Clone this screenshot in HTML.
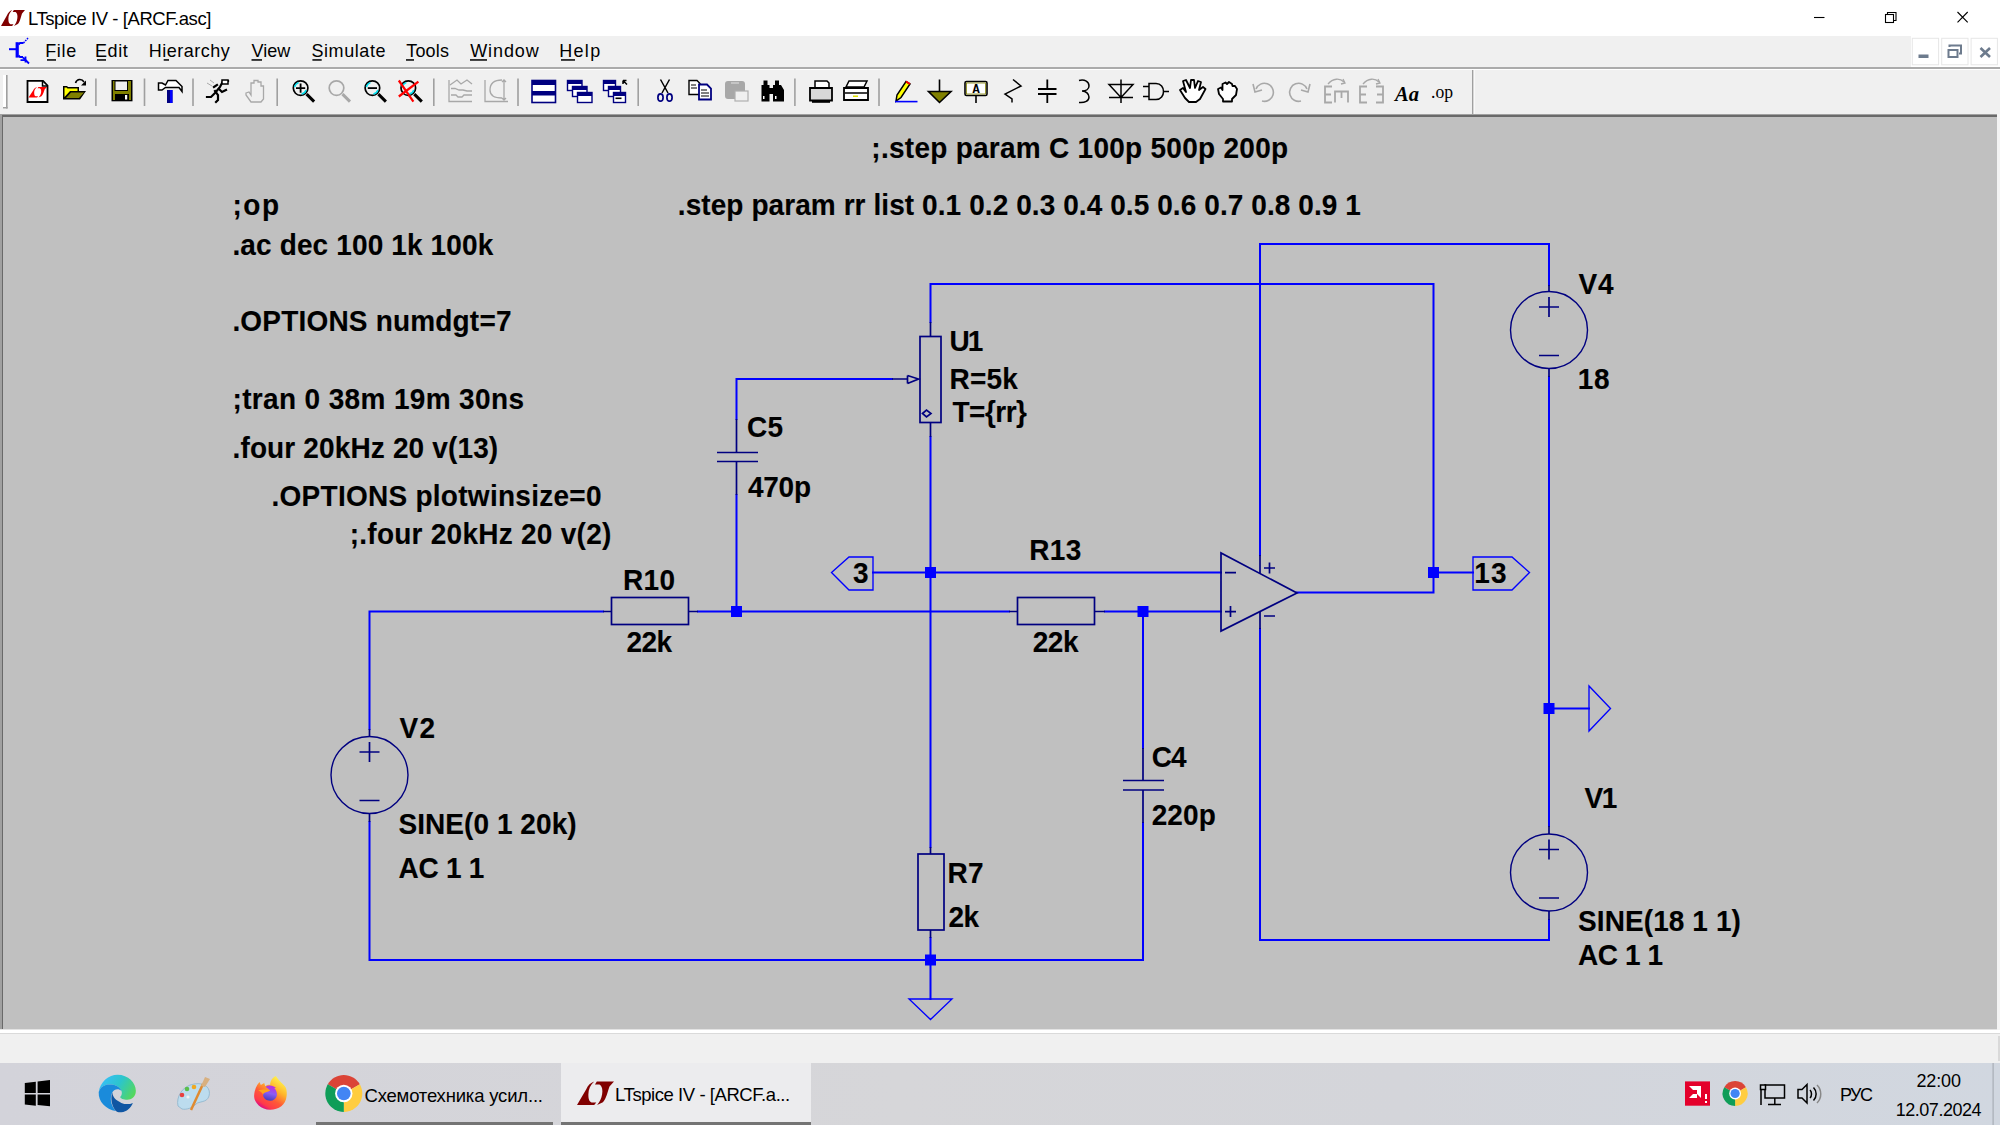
<!DOCTYPE html>
<html><head><meta charset="utf-8">
<style>
*{margin:0;padding:0;box-sizing:border-box}
html,body{width:2000px;height:1125px;overflow:hidden;background:#f0f0f0;font-family:"Liberation Sans",sans-serif}
.abs{position:absolute}
#title{left:0;top:0;width:2000px;height:36px;background:#fff}
#menu{left:0;top:36px;width:2000px;height:31px;background:#f0f0f0}
#menuline{left:0;top:67px;width:2000px;height:2px;background:#ababab}
#menuline2{left:0;top:69px;width:2000px;height:1px;background:#fff}
#tool{left:0;top:70px;width:2000px;height:44px;background:#f0f0f0}
#canvasframe{left:0;top:114px;width:2000px;height:916px;background:#a0a0a0}
#canvas{left:3px;top:117px;width:1994px;height:912px;background:#c0c0c0}
#status{left:0;top:1029px;width:2000px;height:34px;background:#f0f0f0}
#taskbar{left:0;top:1063px;width:2000px;height:62px;background:linear-gradient(90deg,#d3d3da 0%,#d6d6d9 45%,#d4d5da 70%,#d1d7e0 100%)}
.mi{position:absolute;top:40px;font-size:18px;color:#000;white-space:nowrap}
.sep{position:absolute;top:78px;width:2px;height:28px;background:#a0a0a0}
</style></head><body>
<div class="abs" id="title"></div>
<div class="abs" id="menu"></div>
<div class="abs" style="left:1911px;top:36px;width:89px;height:31px;background:#fff"></div>
<div class="abs" id="menuline"></div>
<div class="abs" id="menuline2"></div>
<div class="abs" id="tool"></div>
<div class="abs" id="canvasframe"></div>
<div class="abs" style="left:2px;top:115px;width:1995px;height:2px;background:#696969"></div>
<div class="abs" style="left:2px;top:115px;width:1px;height:914px;background:#696969"></div>
<div class="abs" id="canvas"></div>
<div class="abs" id="status"></div>
<div class="abs" style="left:0;top:1029px;width:2000px;height:1px;background:#e3e3e3"></div>
<div class="abs" style="left:0;top:1030px;width:2000px;height:3px;background:#fff"></div>
<div class="abs" style="left:0;top:1033px;width:2000px;height:1px;background:#dadada"></div>
<div class="abs" style="left:1997px;top:114px;width:3px;height:916px;background:#f4f4f4"></div>
<div class="abs" id="taskbar"></div>
<svg class="abs" style="left:0;top:0" width="2000" height="1125" viewBox="0 0 2000 1125"><g fill="none" stroke="#0000FF" stroke-width="2" stroke-linecap="square" stroke-linejoin="miter"><path d="M1549,285 V244 H1260"/><path d="M930.5,322 V284 H1433.5 V592.5 H1297"/><path d="M1433.5,572.5 H1473"/><path d="M1260,555 V244"/><path d="M1260,629 V940 H1549 V920"/><path d="M1549,377 V826"/><path d="M1549,708.5 H1589"/><path d="M930.5,437 V847"/><path d="M873,572.5 H1221"/><path d="M369.5,729 V611.5 H603"/><path d="M698,611.5 H1009"/><path d="M1105,611.5 H1221"/><path d="M736.5,419 V379 H892"/><path d="M736.5,495 V611.5"/><path d="M1143,611.5 V748"/><path d="M1143,823 V960"/><path d="M369.5,822 V960 H1143"/><path d="M930.5,938 V999"/></g><g fill="#0000FF"><rect x="925.0" y="567.0" width="11" height="11"/><rect x="731.0" y="606.0" width="11" height="11"/><rect x="1137.5" y="606.0" width="11" height="11"/><rect x="1428.0" y="567.0" width="11" height="11"/><rect x="925.0" y="954.5" width="11" height="11"/><rect x="1543.5" y="703.0" width="11" height="11"/></g><g fill="none" stroke="#0000FF" stroke-width="1.35"><path d="M909,999 H952 L930.5,1019.5 Z"/><path d="M1589,686 V731 L1610.5,708.5 Z"/><path d="M873,557 V590 H849 L831.5,572.5 L849,557 Z"/><path d="M1473,557 V590 H1512 L1529.5,572.5 L1512,557 Z"/></g><g fill="none" stroke="#000080" stroke-width="1.7"><rect x="611.5" y="597.5" width="77" height="27"/><path d="M603,611.5 H611.5 M688.5,611.5 H698"/><rect x="1017.5" y="597.5" width="77" height="27"/><path d="M1009,611.5 H1017.5 M1094.5,611.5 H1105"/><rect x="918" y="854" width="26" height="76"/><path d="M930.5,847 V854 M930.5,930 V938"/><rect x="920" y="336.5" width="21" height="86"/><path d="M930.5,322 V336.5 M930.5,422.5 V437"/><path d="M892,379 H907 M907.5,375.5 V383.5 M907.5,375.5 L918.5,379 L907.5,383.5"/><path d="M922.5,413.5 L926.5,410 L931,413.5 L926.5,417 Z"/><path d="M736.5,419 V452.5 M717,452.5 H758 M717,461.5 H758 M736.5,461.5 V495"/><path d="M1143,748 V780.5 M1123,780.5 H1164 M1123,790 H1164 M1143,790 V823"/><path d="M1221,553 V631 L1297,593 Z"/><path d="M1260,555 V573 M1260,611 V629"/><path d="M1225,572.7 H1236 M1225,611.6 H1236 M1230.5,606 V617 M1264,568 H1275 M1269.5,562.5 V573.5 M1264,616 H1275"/><circle cx="369.5" cy="775" r="38.5" stroke-width="1.4"/><path d="M369.5,729 V736.5 M369.5,813.5 V822 M359.5,752 H379.5 M369.5,742 V762 M359.5,800.5 H379.5"/><circle cx="1549" cy="330" r="38.5" stroke-width="1.4"/><path d="M1549,285 V291.5 M1549,368.5 V377 M1539,307 H1559 M1549,297 V317 M1539,355.5 H1559"/><circle cx="1549" cy="872.5" r="38.5" stroke-width="1.4"/><path d="M1549,826 V834.0 M1549,911.0 V920 M1539,849.5 H1559 M1549,839.5 V859.5 M1539,898.0 H1559"/></g><g font-family="Liberation Sans" font-weight="bold" font-size="28" fill="#000" stroke="#000" stroke-width="0.12"><text transform="translate(871.3,157.90) scale(1,1.05)" x="0" y="0" textLength="416.8" lengthAdjust="spacing">;.step param C 100p 500p 200p</text><text transform="translate(677.8,214.80) scale(1,1.05)" x="0" y="0" textLength="683.1" lengthAdjust="spacing">.step param rr list 0.1 0.2 0.3 0.4 0.5 0.6 0.7 0.8 0.9 1</text><text transform="translate(232.6,215.00) scale(1,1.05)" x="0" y="0" textLength="46.4" lengthAdjust="spacing">;op</text><text transform="translate(232.4,254.70) scale(1,1.05)" x="0" y="0" textLength="260.9" lengthAdjust="spacing">.ac dec 100 1k 100k</text><text transform="translate(232.4,331.20) scale(1,1.05)" x="0" y="0" textLength="279.1" lengthAdjust="spacing">.OPTIONS numdgt=7</text><text transform="translate(232.5,409.10) scale(1,1.05)" x="0" y="0" textLength="291.5" lengthAdjust="spacing">;tran 0 38m 19m 30ns</text><text transform="translate(232.5,458.10) scale(1,1.05)" x="0" y="0" textLength="265.7" lengthAdjust="spacing">.four 20kHz 20 v(13)</text><text transform="translate(271.5,506.40) scale(1,1.05)" x="0" y="0" textLength="330.0" lengthAdjust="spacing">.OPTIONS plotwinsize=0</text><text transform="translate(349.7,543.50) scale(1,1.05)" x="0" y="0" textLength="261.6" lengthAdjust="spacing">;.four 20kHz 20 v(2)</text><text transform="translate(949.5,351.40) scale(1,1.05)" x="0" y="0" textLength="33.9" lengthAdjust="spacing">U1</text><text transform="translate(949.5,388.70) scale(1,1.05)" x="0" y="0" textLength="68.3" lengthAdjust="spacing">R=5k</text><text transform="translate(952.4,421.60) scale(1,1.05)" x="0" y="0" textLength="74.6" lengthAdjust="spacing">T={rr}</text><text transform="translate(747.0,436.70) scale(1,1.05)" x="0" y="0" textLength="36.1" lengthAdjust="spacing">C5</text><text transform="translate(748.0,496.60) scale(1,1.05)" x="0" y="0" textLength="63.0" lengthAdjust="spacing">470p</text><text transform="translate(623.0,590.30) scale(1,1.05)" x="0" y="0" textLength="52.1" lengthAdjust="spacing">R10</text><text transform="translate(626.5,651.55) scale(1,1.05)" x="0" y="0" textLength="45.7" lengthAdjust="spacing">22k</text><text transform="translate(1029.2,559.55) scale(1,1.05)" x="0" y="0" textLength="52.1" lengthAdjust="spacing">R13</text><text transform="translate(1032.8,651.55) scale(1,1.05)" x="0" y="0" textLength="45.7" lengthAdjust="spacing">22k</text><text transform="translate(853.0,583.20) scale(1,1.05)" x="0" y="0">3</text><text transform="translate(1474.3,583.00) scale(1,1.05)" x="0" y="0" textLength="32.2" lengthAdjust="spacing">13</text><text transform="translate(1578.5,293.70) scale(1,1.05)" x="0" y="0" textLength="35.0" lengthAdjust="spacing">V4</text><text transform="translate(1577.8,388.90) scale(1,1.05)" x="0" y="0" textLength="31.9" lengthAdjust="spacing">18</text><text transform="translate(399.4,737.50) scale(1,1.05)" x="0" y="0" textLength="35.6" lengthAdjust="spacing">V2</text><text transform="translate(398.5,834.20) scale(1,1.05)" x="0" y="0" textLength="178.1" lengthAdjust="spacing">SINE(0 1 20k)</text><text transform="translate(398.5,878.20) scale(1,1.05)" x="0" y="0" textLength="85.9" lengthAdjust="spacing">AC 1 1</text><text transform="translate(1151.7,766.80) scale(1,1.05)" x="0" y="0" textLength="34.9" lengthAdjust="spacing">C4</text><text transform="translate(1151.7,824.80) scale(1,1.05)" x="0" y="0" textLength="64.1" lengthAdjust="spacing">220p</text><text transform="translate(947.6,882.70) scale(1,1.05)" x="0" y="0" textLength="36.0" lengthAdjust="spacing">R7</text><text transform="translate(948.6,927.20) scale(1,1.05)" x="0" y="0" textLength="30.5" lengthAdjust="spacing">2k</text><text transform="translate(1584.5,808.30) scale(1,1.05)" x="0" y="0" textLength="32.8" lengthAdjust="spacing">V1</text><text transform="translate(1578.0,930.80) scale(1,1.05)" x="0" y="0" textLength="162.9" lengthAdjust="spacing">SINE(18 1 1)</text><text transform="translate(1578.0,965.30) scale(1,1.05)" x="0" y="0" textLength="85.2" lengthAdjust="spacing">AC 1 1</text></g><rect x="561" y="1063" width="250" height="62" fill="#ececee"/><g transform="translate(1,10) scale(0.01714,0.01882) translate(-170,-150)" fill="#800000"><path d="M820,150 C690,200 580,280 520,430 L170,1000 H820 L900,905 H720 C640,880 600,800 600,620 C600,420 680,280 820,150 Z"/><path d="M850,255 L920,150 H1570 L1400,330 C1330,500 1280,780 1150,900 L930,1000 L1000,905 C1080,800 1130,650 1130,500 C1130,380 1090,290 1020,258 Z"/></g><g font-family="Liberation Sans" fill="#000"><text transform="translate(28.0,24.90) scale(1,1.04)" x="0" y="0" font-size="18.5" textLength="183.4" lengthAdjust="spacing">LTspice IV - [ARCF.asc]</text><text transform="translate(45.2,57.10) scale(1,1.04)" x="0" y="0" font-size="18" textLength="31.0" lengthAdjust="spacing">File</text><text transform="translate(95.0,57.10) scale(1,1.04)" x="0" y="0" font-size="18" textLength="32.7" lengthAdjust="spacing">Edit</text><text transform="translate(148.7,57.10) scale(1,1.04)" x="0" y="0" font-size="18" textLength="81.0" lengthAdjust="spacing">Hierarchy</text><text transform="translate(251.5,57.10) scale(1,1.04)" x="0" y="0" font-size="18" textLength="38.7" lengthAdjust="spacing">View</text><text transform="translate(311.4,57.10) scale(1,1.04)" x="0" y="0" font-size="18" textLength="74.1" lengthAdjust="spacing">Simulate</text><text transform="translate(406.2,57.10) scale(1,1.04)" x="0" y="0" font-size="18" textLength="42.8" lengthAdjust="spacing">Tools</text><text transform="translate(470.2,57.10) scale(1,1.04)" x="0" y="0" font-size="18" textLength="68.6" lengthAdjust="spacing">Window</text><text transform="translate(559.2,57.10) scale(1,1.04)" x="0" y="0" font-size="18" textLength="41.0" lengthAdjust="spacing">Help</text><text transform="translate(364.5,1101.50) scale(1,1.04)" x="0" y="0" font-size="18.5" textLength="178.5" lengthAdjust="spacing">Схемотехника усил...</text><text transform="translate(615.1,1101.40) scale(1,1.04)" x="0" y="0" font-size="18.5" textLength="175.1" lengthAdjust="spacing">LTspice IV - [ARCF.a...</text><text transform="translate(1840.0,1101.30) scale(1,1.04)" x="0" y="0" font-size="18" textLength="33.1" lengthAdjust="spacing">РУС</text><text transform="translate(1916.5,1086.90) scale(1,1.04)" x="0" y="0" font-size="18" textLength="44.5" lengthAdjust="spacing">22:00</text><text transform="translate(1895.8,1115.70) scale(1,1.04)" x="0" y="0" font-size="18" textLength="85.7" lengthAdjust="spacing">12.07.2024</text></g><g fill="#000"><rect x="47" y="59.2" width="9" height="1.5"/><rect x="97" y="59.2" width="9" height="1.5"/><rect x="163.7" y="59.2" width="5.300000000000011" height="1.5"/><rect x="251.5" y="59.2" width="10.5" height="1.5"/><rect x="312.4" y="59.2" width="9.300000000000011" height="1.5"/><rect x="406" y="59.2" width="8" height="1.5"/><rect x="470" y="59.2" width="17" height="1.5"/><rect x="561" y="59.2" width="14" height="1.5"/></g><g fill="none" stroke="#000" stroke-width="1.1"><path d="M1814,17.5 H1824.5"/><path d="M1887.5,14.5 V12.5 H1896 V20.5 H1894"/><rect x="1885.5" y="14.5" width="8" height="8"/><path d="M1957.5,12 L1967.7,22.3 M1967.7,12 L1957.5,22.3"/></g><g fill="#fff" stroke="#e6e6e6" stroke-width="1"><rect x="1912.3" y="38.3" width="26.3" height="26.5"/><rect x="1941.7" y="38.3" width="26.3" height="26.5"/><rect x="1971.1" y="38.3" width="26.3" height="26.5"/></g><g fill="#6d7b8d"><rect x="1918.5" y="54.5" width="10" height="3.5"/></g><g fill="none" stroke="#6d7b8d" stroke-width="2"><path d="M1949.5,47 V45.5 H1961 V53.5 H1959"/><rect x="1948.5" y="50" width="9" height="7"/><path d="M1980.5,48 L1990,57 M1990,48 L1980.5,57" stroke-width="2.6"/></g><g fill="#0000ff" stroke="#0000ff" fill-opacity="1"><rect x="15.6" y="42.2" width="3.2" height="15.4" stroke="none"/><path d="M9,49.2 H16" stroke-width="2" fill="none"/><path d="M18.5,44.5 L20,43 H23.5" stroke-width="1.8" fill="none"/><path d="M23.5,43 L28,38" stroke-width="1.5" fill="none" stroke-dasharray="1.6,1"/><path d="M18.5,55.5 L20,57 H23" stroke-width="1.8" fill="none"/><path d="M23,57.5 L27,61.5 L29,63.5" stroke-width="1.8" fill="none"/><path d="M20.5,60.2 H25.5 M25.5,56.5 V62.5" stroke-width="1.8" fill="none"/></g><g fill="#a0a0a0"><rect x="95.1" y="78.5" width="1.6" height="27.5"/><rect x="143.7" y="78.5" width="1.6" height="27.5"/><rect x="192.2" y="78.5" width="1.6" height="27.5"/><rect x="276.4" y="78.5" width="1.6" height="27.5"/><rect x="433.0" y="78.5" width="1.6" height="27.5"/><rect x="517.2" y="78.5" width="1.6" height="27.5"/><rect x="637.4" y="78.5" width="1.6" height="27.5"/><rect x="794.1" y="78.5" width="1.6" height="27.5"/><rect x="878.2" y="78.5" width="1.6" height="27.5"/></g><rect x="3" y="75" width="3" height="33.5" fill="#fff"/><rect x="6" y="75" width="1.6" height="33.5" fill="#a0a0a0"/><rect x="3" y="107" width="4.6" height="1.5" fill="#a0a0a0"/><rect x="1472" y="70" width="1.6" height="44" fill="#a0a0a0"/><rect x="1473.6" y="70" width="1" height="44" fill="#fff"/><path d="M27.5,80.8 H43 L47.5,85.5 V102 H27.5 Z" fill="#fff" stroke="#000" stroke-width="1.8"/><path d="M42.5,81 V86 H47.5" fill="none" stroke="#000" stroke-width="1.5"/><g transform="translate(28.5,87) scale(0.01321,0.01235) translate(-170,-150)" fill="#ff0000"><path d="M820,150 C690,200 580,280 520,430 L170,1000 H820 L900,905 H720 C640,880 600,800 600,620 C600,420 680,280 820,150 Z"/><path d="M850,255 L920,150 H1570 L1400,330 C1330,500 1280,780 1150,900 L930,1000 L1000,905 C1080,800 1130,650 1130,500 C1130,380 1090,290 1020,258 Z"/></g><path d="M63,86 H67 L68,87 H79 V91 H86 L80,99.5 H63 Z" fill="#000"/><path d="M64.5,87.5 H66.5 L67.5,88.5 H77.5 V91 H70 L64.5,97 Z" fill="#ffff00"/><path d="M66,98 L71,92.5 H84 L79,98 Z" fill="#808000"/><path d="M75.5,83 C77,78.5 82,78.5 84,82" fill="none" stroke="#000" stroke-width="1.6"/><path d="M86,80.5 V85.5 H81 Z" fill="#000"/><rect x="111.5" y="80" width="21" height="21.3" fill="#000"/><rect x="113" y="81" width="18" height="19" fill="#808000"/><rect x="115" y="81" width="12.5" height="9.5" fill="#f0f0f0" stroke="#000" stroke-width="1"/><rect x="115" y="94" width="14" height="6.5" fill="#000"/><rect x="125" y="95" width="2.2" height="4.5" fill="#fff"/><path d="M158.5,83 H162 L165.5,85 L168,80.5 H176 L182,86.5 V91.5 L179,87.5 H165.5 L162,90 H158.5 Z" fill="#fff" stroke="#000" stroke-width="1.5"/><rect x="167" y="90" width="5.5" height="13" fill="#000080"/><rect x="170" y="90" width="2.5" height="13" fill="#0000ff"/><g fill="none" stroke="#000" stroke-width="2.2" stroke-linecap="square"><path d="M207,97 H211 L215,93 L220,87 L223,81 H228"/><path d="M215,91 L218,95 L218,100 L216,102"/><path d="M219,89 L222,92 L226,90"/><path d="M214,87 L217,85"/></g><rect x="222" y="80" width="6" height="4" fill="#fff" stroke="#000" stroke-width="1.5"/><path d="M207,83 L212,86 M210,80 L214,83" stroke="#aaa" stroke-width="1" fill="none"/><path d="M246,93 L249,92 L251,95 V83 H254 V80.5 H258 V82 H261 V86 H263.5 V99 L261,102 H251 L246,95 Z" fill="none" stroke="#a8a8a8" stroke-width="1.3"/><g fill="none" stroke="#000"><circle cx="300.6" cy="88.1" r="7.3" stroke-width="1.7"/><path d="M306.6,94.1 L314.1,101.6" stroke-width="3"/></g><path d="M294.6,87.1 A6,6 0 0 1 298.6,82.6 M306.1,90.1 A6,6 0 0 1 301.6,94.1" stroke="#00e0f0" stroke-width="1.5" fill="none"/><path d="M296,88.1 H305.2 M300.6,83.5 V92.7" stroke="#000" stroke-width="1.8"/><g fill="none" stroke="#a8a8a8"><circle cx="336.5" cy="88.1" r="7.3" stroke-width="1.7"/><path d="M342.5,94.1 L350.0,101.6" stroke-width="3"/></g><g fill="none" stroke="#000"><circle cx="372.4" cy="88.1" r="7.3" stroke-width="1.7"/><path d="M378.4,94.1 L385.9,101.6" stroke-width="3"/></g><path d="M366.4,87.1 A6,6 0 0 1 370.4,82.6 M377.9,90.1 A6,6 0 0 1 373.4,94.1" stroke="#00e0f0" stroke-width="1.5" fill="none"/><path d="M367.8,88.1 H377" stroke="#000" stroke-width="1.8"/><g fill="none" stroke="#000"><circle cx="408.3" cy="88.1" r="7.3" stroke-width="1.7"/><path d="M414.3,94.1 L421.8,101.6" stroke-width="3"/></g><path d="M402.3,87.1 A6,6 0 0 1 406.3,82.6 M413.8,90.1 A6,6 0 0 1 409.3,94.1" stroke="#00e0f0" stroke-width="1.5" fill="none"/><path d="M398.8,80.5 L413.4,101.6 M418.4,81.6 L398.8,96.5" stroke="#ff0000" stroke-width="2.2"/><g fill="none" stroke="#a8a8a8" stroke-width="1.3"><path d="M449,80 V101.5 H472"/><path d="M450,85 L457,80 L461,84 L467,80 L472,84"/><path d="M451,88.5 H455 L459,90 H463 L467,91 H472"/><path d="M451,95 H456 L458,97 H462 L464,95 H472"/><path d="M485,80 V101.5 H508"/><path d="M502,80 C494,80 490,84 490,90 C490,96 495,98 502,98"/><path d="M504,80 V100 M502,82 L504,80 L506,82 M502,98 L504,100 L506,98"/></g><rect x="532" y="80.5" width="23.5" height="22" fill="#fff" stroke="#000080" stroke-width="1.6"/><rect x="532" y="80.5" width="23.5" height="4.5" fill="#000080"/><rect x="532" y="91" width="23.5" height="4.5" fill="#000080"/><rect x="567.5" y="80.5" width="14.5" height="10" fill="#fff" stroke="#000080" stroke-width="1.4"/><rect x="567.5" y="80.5" width="14.5" height="3.5" fill="#000080"/><rect x="572.5" y="86.5" width="14.5" height="10" fill="#fff" stroke="#000080" stroke-width="1.4"/><rect x="572.5" y="86.5" width="14.5" height="3.5" fill="#000080"/><rect x="577.5" y="92.5" width="14.5" height="10" fill="#fff" stroke="#000080" stroke-width="1.4"/><rect x="577.5" y="92.5" width="14.5" height="3.5" fill="#000080"/><rect x="603.5" y="80.5" width="12" height="10" fill="#fff" stroke="#000080" stroke-width="1.4"/><rect x="603.5" y="80.5" width="12" height="3.5" fill="#000080"/><rect x="608.5" y="86.5" width="12" height="10" fill="#fff" stroke="#000080" stroke-width="1.4"/><rect x="608.5" y="86.5" width="12" height="3.5" fill="#000080"/><rect x="613.5" y="92.5" width="12" height="10" fill="#fff" stroke="#000080" stroke-width="1.4"/><rect x="613.5" y="92.5" width="12" height="3.5" fill="#000080"/><rect x="615.5" y="97.5" width="6" height="1.6" fill="#000"/><path d="M623,80.5 L627,84.5 M623,80.5 V84 M623,80.5 H626.5" stroke="#000" stroke-width="1.5" fill="none"/><g fill="none" stroke-width="1.5"><path d="M660.5,79.5 L668,93 M669.5,79.5 L662,93" stroke="#000"/><ellipse cx="660.5" cy="97.5" rx="2.6" ry="3.6" stroke="#000080" stroke-width="1.7"/><ellipse cx="669.5" cy="97.5" rx="2.6" ry="3.6" stroke="#000080" stroke-width="1.7"/></g><path d="M689,80.5 H697 L700,83.5 V94.5 H689 Z" fill="#fff" stroke="#000" stroke-width="1.4"/><path d="M699,84.5 H707 L711,88.5 V99.5 H699 Z" fill="#fff" stroke="#000080" stroke-width="1.8"/><path d="M691,85 H696 M691,88 H697 M701,90 H707 M701,93 H709 M701,96 H709" stroke="#000" stroke-width="1"/><rect x="725" y="81" width="20" height="18" rx="3" fill="#a8a8a8"/><rect x="735" y="91" width="13" height="10" fill="#f0f0f0" stroke="#b0b0b0" stroke-width="1.2"/><path d="M731,83 H739" stroke="#d8d8d8" stroke-width="1.2"/><g fill="#000"><rect x="763.5" y="80.5" width="4" height="5"/><rect x="775" y="80.5" width="4" height="5"/><path d="M761.5,85 H769.5 V101.5 H761.5 Z"/><path d="M773,85 H781 L784,90 V101.5 H773 Z"/><rect x="769" y="88" width="4" height="6"/></g><rect x="763" y="96" width="1.5" height="3" fill="#fff"/><rect x="775" y="96" width="1.5" height="3" fill="#fff"/><path d="M815,81 H827 L829,83 V88 H815 Z" fill="#fff" stroke="#000" stroke-width="1.5"/><path d="M810,88 H832 V100.5 H810 Z" fill="#d8d8d8" stroke="#000" stroke-width="1.8"/><rect x="812" y="101" width="18" height="1.8" fill="#000"/><path d="M849,81 H867 L864,87 H846 Z" fill="#fff" stroke="#000" stroke-width="1.5"/><path d="M844,88 H868 V100 H844 Z" fill="#fff" stroke="#000" stroke-width="1.8"/><path d="M845,93 H867" stroke="#000" stroke-width="1.5"/><rect x="853" y="95.5" width="5" height="1.5" fill="#e0e000"/><path d="M896,101 L897,95 L906,81.5 L910,84 L901,97.5 Z" fill="#ffff00" stroke="#000" stroke-width="1.5"/><path d="M906,81.5 L910,84" stroke="#ff0000" stroke-width="2"/><rect x="895" y="100.8" width="22.5" height="1.6" fill="#0000ff"/><path d="M939.5,79.5 V91.5" stroke="#000" stroke-width="1.6"/><path d="M928.5,91.5 H951 L939.5,102.5 Z" fill="#808000" stroke="#000" stroke-width="1.6"/><path d="M932.5,93.5 H947 L939.5,100 Z" fill="#c0c0a0" opacity="0"/><rect x="965" y="81.5" width="22" height="14" rx="1.5" fill="#fff" stroke="#000" stroke-width="1.6"/><rect x="966.5" y="83" width="19" height="11" fill="none" stroke="#808000" stroke-width="0.8"/><text x="976" y="93" font-family="Liberation Mono" font-weight="bold" font-size="12" text-anchor="middle">A</text><path d="M976,96 V103" stroke="#000" stroke-width="1.6"/><path d="M1013,79.5 L1021,86 L1005,94 L1012,99 V102.5" fill="none" stroke="#000" stroke-width="1.5"/><path d="M1047.3,79.5 V89 M1038,89 H1056.5 M1038,94 H1056.5 M1047.3,94 V103" fill="none" stroke="#000" stroke-width="1.8"/><path d="M1079,80.5 C1085,79 1089,82 1089,86 C1089,89 1086,91 1082,91 C1086,91 1089,94 1089,97 C1089,101 1085,103 1079,102.5" fill="none" stroke="#000" stroke-width="1.5"/><path d="M1121,79.5 V103 M1109,84.5 H1133 L1121,97.5 Z M1109,97.5 H1133" fill="none" stroke="#000" stroke-width="1.5"/><path d="M1149,83.5 H1156 C1166,83.5 1166,99.5 1156,99.5 H1149 Z M1143,86.5 H1149 M1143,96.5 H1149 M1163,91.5 H1169" fill="none" stroke="#000" stroke-width="1.5"/><path d="M1180,90 L1183,88 L1186,92 L1183,81 L1186,80 L1190,88 L1191,80 L1194,80 L1195,88 L1198,81 L1201,82 L1199,90 L1203,87 L1205.5,89 L1200,99 L1196,102 H1189 L1185,98 Z" fill="#fff" stroke="#000" stroke-width="1.8" stroke-linejoin="round"/><path d="M1218,89 L1221,87.5 L1222.5,90 V84 L1225.5,82.5 L1227,84 L1229,82 L1232,84 L1232.5,86 L1235,86 L1237,89 L1236,95 L1232,99 V101.5 H1223 V99 L1219,94 Z" fill="#fff" stroke="#000" stroke-width="1.8" stroke-linejoin="round"/><g fill="none" stroke="#a8a8a8" stroke-width="1.6"><path d="M1256,89 A9,9 0 1 1 1262,101"/><path d="M1253,84 L1255,92 L1262,90"/><path d="M1307,89 A9,9 0 1 0 1301,101"/><path d="M1310,84 L1308,92 L1301,90"/></g><g fill="none" stroke="#a8a8a8" stroke-width="1.8"><path d="M1332,86.5 H1325 V102.5 H1332 M1325,94.5 H1331"/><path d="M1335,102.5 V91.5 H1348 V102.5 M1341.5,91.5 V98"/><path d="M1328,84 C1333,78 1340,78 1344,82" stroke-width="1.3"/><path d="M1343,79 L1345,83 L1341,84" stroke-width="1.3"/><path d="M1367,86.5 H1360 V102.5 H1367 M1360,94.5 H1366"/><path d="M1376,86.5 H1383 V102.5 H1376 M1383,94.5 H1377"/><path d="M1363,84 C1368,78 1375,78 1379,82" stroke-width="1.3"/><path d="M1378,79 L1380,83 L1376,84" stroke-width="1.3"/></g><text x="1395" y="101" font-family="Liberation Serif" font-style="italic" font-weight="bold" font-size="21" fill="#000" textLength="24" lengthAdjust="spacingAndGlyphs">Aa</text><text x="1431" y="98" font-family="Liberation Serif" font-size="19" fill="#000" textLength="22" lengthAdjust="spacingAndGlyphs">.op</text><rect x="316" y="1122" width="237" height="3" fill="#747474"/><rect x="561" y="1122" width="250" height="3" fill="#747474"/><rect x="1998" y="1036" width="2" height="25" fill="#d9d9d9"/><rect x="1992.5" y="1063" width="1.2" height="62" fill="#a9aeb6"/><g fill="#000"><path d="M24.8,1083 L35.8,1081.8 V1093 H24.8 Z"/><path d="M37.6,1081.5 L50,1080 V1093 H37.6 Z"/><path d="M24.8,1094.6 H35.8 V1105.7 L24.8,1104.5 Z"/><path d="M37.6,1094.6 H50 V1106.3 L37.6,1105 Z"/></g><defs><linearGradient id="edg1" x1="0" y1="0" x2="1" y2="1"><stop offset="0" stop-color="#35c1f1"/><stop offset="0.6" stop-color="#2db67a"/><stop offset="1" stop-color="#6de27a"/></linearGradient><linearGradient id="edg2" x1="0" y1="0" x2="0" y2="1"><stop offset="0" stop-color="#1a8ee0"/><stop offset="1" stop-color="#0b57a8"/></linearGradient><radialGradient id="ffx" cx="0.5" cy="0.4" r="0.6"><stop offset="0" stop-color="#ffcf3a"/><stop offset="0.5" stop-color="#ff7a1a"/><stop offset="1" stop-color="#e8245a"/></radialGradient><radialGradient id="ffp" cx="0.5" cy="0.5" r="0.5"><stop offset="0" stop-color="#6b3ed6"/><stop offset="1" stop-color="#a32fb4"/></radialGradient></defs><g transform="translate(94,1072) scale(0.039108)"><linearGradient id="edgA" x1="0" y1="0.3" x2="1" y2="0.7"><stop offset="0" stop-color="#38befa"/><stop offset="0.5" stop-color="#2cc5cc"/><stop offset="1" stop-color="#55d85a"/></linearGradient><path d="M120,520 C150,250 380,70 600,70 C880,70 1070,280 1070,480 C1070,640 960,710 850,710 C760,710 670,680 670,640 C720,590 720,520 700,480 C650,330 430,300 300,330 C200,360 140,430 120,520 Z" fill="url(#edgA)"/><path d="M120,520 C140,430 200,360 300,330 C430,300 650,330 700,480 C640,420 520,420 470,520 C400,650 420,850 560,1000 C300,960 110,760 120,520 Z" fill="#1a8bdb"/><path d="M470,520 C420,650 440,860 560,1000 C590,1030 640,1035 700,1030 C840,1010 940,920 995,790 C900,830 800,830 700,790 C560,730 470,640 470,520 Z" fill="#0f56a3"/></g><path d="M178,1106 C176,1097 182,1086 194,1084 C206,1082 211,1089 209,1096 C207,1103 199,1101 196,1104 C193,1108 186,1110 182,1109 Z" fill="#bcdcee" stroke="#8cb4cc" stroke-width="0.8"/><circle cx="182" cy="1095" r="2.3" fill="#e74040"/><circle cx="187" cy="1089" r="2.3" fill="#5cbf4a"/><circle cx="194" cy="1087" r="2.3" fill="#f0a820"/><circle cx="188" cy="1097" r="1.6" fill="#f0f0f0"/><path d="M191,1110 L203,1084" stroke="#e08a30" stroke-width="2.5"/><path d="M201,1086 L205,1077 L210,1079 L205,1087 Z" fill="#d8b080"/><g transform="translate(250,1072) scale(0.037327)"><linearGradient id="ffA" x1="0.85" y1="0.1" x2="0.3" y2="0.95"><stop offset="0" stop-color="#fff44f"/><stop offset="0.35" stop-color="#ffb52a"/><stop offset="0.65" stop-color="#ff5a36"/><stop offset="0.9" stop-color="#ff3a4a"/><stop offset="1" stop-color="#e3157a"/></linearGradient><linearGradient id="ffB" x1="0.6" y1="0.1" x2="0.4" y2="0.95"><stop offset="0" stop-color="#b833e1"/><stop offset="0.5" stop-color="#8a5cf5"/><stop offset="1" stop-color="#4a3fc0"/></linearGradient><path d="M110,640 C120,480 170,350 255,265 L290,350 L380,295 L410,380 C450,350 500,340 540,345 C540,250 600,150 690,110 C780,250 900,330 960,420 C990,500 990,600 980,650 C960,880 770,1010 540,1010 C300,1010 110,820 110,640 Z" fill="url(#ffA)"/><path d="M420,395 C470,355 560,340 640,390 L720,440 C700,430 670,425 650,430 C700,480 730,560 720,630 C700,720 630,770 540,770 C430,770 350,700 350,610 C350,560 380,530 420,520 C480,510 530,500 540,490 C500,460 450,430 420,395 Z" fill="url(#ffB)"/><path d="M220,495 C300,470 420,460 540,490 C500,530 440,540 380,560 C360,570 350,590 350,610 C330,560 290,520 220,495 Z" fill="#ffa31a"/></g><path d="M343.8,1093.5 L327.78,1084.25 A18.5,18.5 0 0 1 359.82,1084.25 Z" fill="#db4437"/><path d="M343.8,1093.5 L359.82,1084.25 A18.5,18.5 0 0 1 343.80,1112.00 Z" fill="#ffcd40"/><path d="M343.8,1093.5 L343.80,1112.00 A18.5,18.5 0 0 1 327.78,1084.25 Z" fill="#0f9d58"/><circle cx="343.8" cy="1093.5" r="8.70" fill="#fff"/><circle cx="343.8" cy="1093.5" r="6.84" fill="#4285f4"/><path d="M1735.1,1093.5 L1724.27,1087.25 A12.5,12.5 0 0 1 1745.93,1087.25 Z" fill="#db4437"/><path d="M1735.1,1093.5 L1745.93,1087.25 A12.5,12.5 0 0 1 1735.10,1106.00 Z" fill="#ffcd40"/><path d="M1735.1,1093.5 L1735.10,1106.00 A12.5,12.5 0 0 1 1724.27,1087.25 Z" fill="#0f9d58"/><circle cx="1735.1" cy="1093.5" r="5.88" fill="#fff"/><circle cx="1735.1" cy="1093.5" r="4.62" fill="#4285f4"/><g transform="translate(577,1081.5) scale(0.02643,0.02765) translate(-170,-150)" fill="#800000"><path d="M820,150 C690,200 580,280 520,430 L170,1000 H820 L900,905 H720 C640,880 600,800 600,620 C600,420 680,280 820,150 Z"/><path d="M850,255 L920,150 H1570 L1400,330 C1330,500 1280,780 1150,900 L930,1000 L1000,905 C1080,800 1130,650 1130,500 C1130,380 1090,290 1020,258 Z"/></g><rect x="1685" y="1081.4" width="25" height="24.3" fill="#e4002b"/><path d="M1689,1086 H1701 V1098 L1697,1094 V1090 H1693 Z M1689,1098 L1693,1094 H1697 V1098 Z" fill="#fff"/><rect x="1705" y="1094" width="2" height="5" fill="#fff"/><rect x="1705" y="1101" width="2" height="2" fill="#fff"/><g fill="none" stroke="#000" stroke-width="1.5"><rect x="1765" y="1085" width="19.5" height="13"/><path d="M1774.8,1098 V1104 M1768,1104.5 H1781 M1761,1090 V1105"/><rect x="1760.5" y="1085" width="5" height="4.5" fill="#d4d9e0"/></g><g fill="none" stroke="#000" stroke-width="1.5"><path d="M1798,1089.5 H1802 L1807,1084.5 V1103 L1802,1098 H1798 Z"/><path d="M1810,1090 C1812,1092 1812,1096 1810,1098"/><path d="M1813.5,1087.5 C1817,1091 1817,1097 1813.5,1100.5"/><path d="M1817,1085 C1822,1090 1822,1098 1817,1103" stroke="#888"/></g></svg>
</body></html>
